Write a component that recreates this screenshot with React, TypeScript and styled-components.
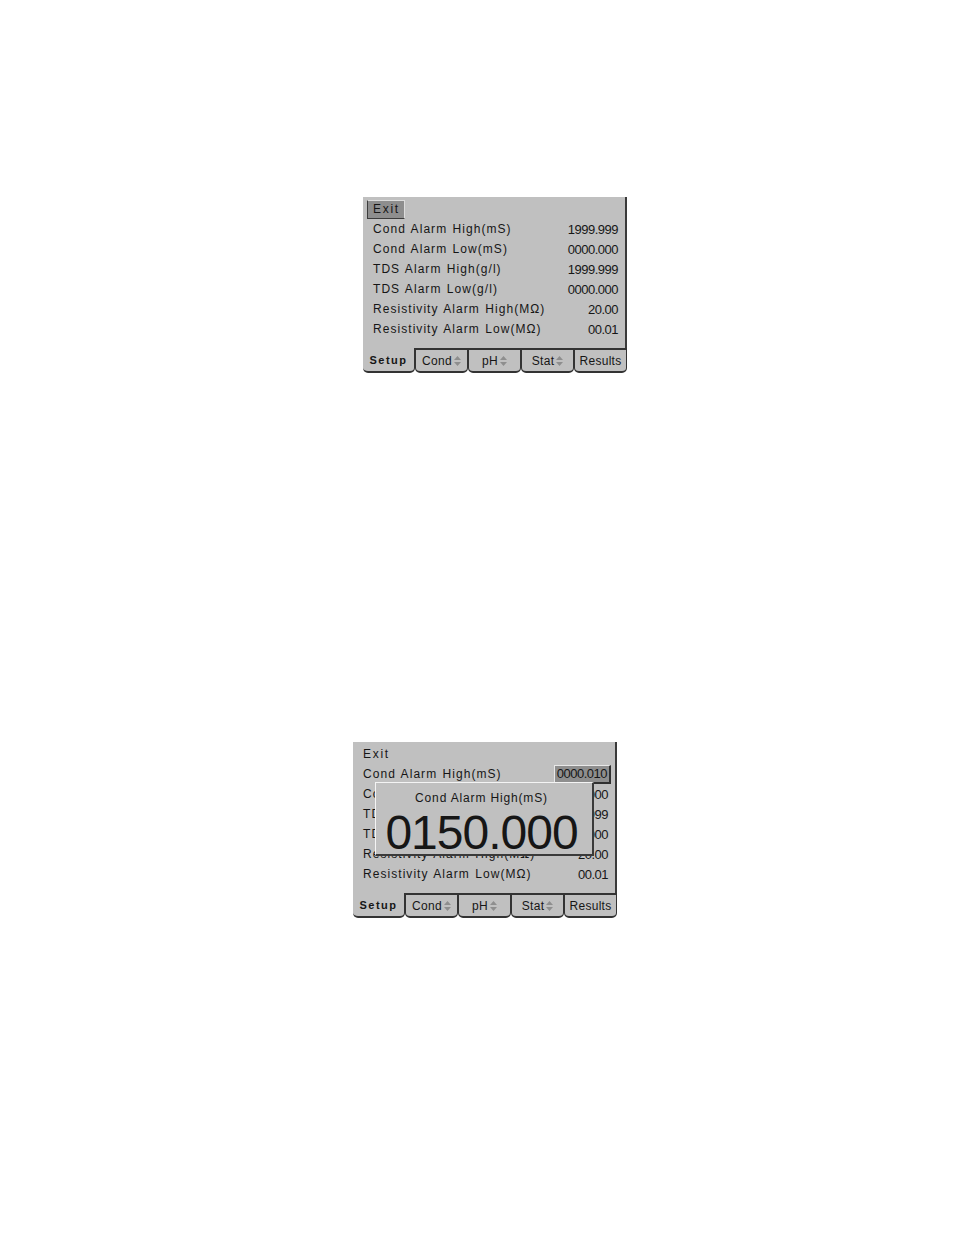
import React from "react";
import styled, { createGlobalStyle } from "styled-components";

const Global = createGlobalStyle`
  html, body { margin: 0; padding: 0; background: #ffffff; }
  body { width: 954px; height: 1235px; overflow: hidden; }
`;

const Page = styled.div`
  display: flex;
  flex-direction: column;
  align-items: flex-start;
  padding-top: 197px;
  font-family: "Liberation Sans", Arial, sans-serif;
  color: #161616;
`;

const Screen = styled.div<{ $left: number; $top?: number }>`
  position: relative;
  width: 264px;
  height: 176px;
  margin-left: ${(p) => p.$left}px;
  margin-top: ${(p) => p.$top ?? 0}px;
  display: flex;
  flex-direction: column;
  background: #ffffff;
`;

const Body = styled.div`
  flex: 1;
  background: #c0c0c0;
  border-right: 2px solid #3a3a3a;
  padding: 2px 7px 0 10px;
  display: flex;
  flex-direction: column;
`;

const Row = styled.div`
  height: 20px;
  display: flex;
  align-items: center;
  justify-content: space-between;
`;

const Label = styled.span`
  font-size: 12px;
  letter-spacing: 1.05px;
  word-spacing: 1px;
  white-space: nowrap;
`;

const ExitText = styled.span<{ $button?: boolean }>`
  font-size: 12px;
  letter-spacing: 1.7px;
  height: 19px;
  display: inline-flex;
  align-items: center;
  box-sizing: border-box;
  ${(p) =>
    p.$button
      ? `
    margin-left: -6px;
    padding: 0 4px 0 5px;
    background: #8e8e8e;
    border-top: 1px solid #dcdcdc;
    border-right: 1px solid #dcdcdc;
    border-left: 1px solid #3c3c3c;
    border-bottom: 1px solid #3c3c3c;
  `
      : ""}
`;

const Value = styled.span<{ $selected?: boolean }>`
  font-size: 13px;
  letter-spacing: -0.5px;
  white-space: nowrap;
  ${(p) =>
    p.$selected
      ? `
    margin-right: -3px;
    padding: 0 2px 0 2px;
    height: 19px;
    box-sizing: border-box;
    display: inline-flex;
    align-items: center;
    background: #8e8e8e;
    border-top: 1px solid #e8e8e8;
    border-left: 1px solid #e8e8e8;
    border-right: 2px solid #303030;
    border-bottom: 2px solid #303030;
  `
      : ""}
`;

const Spacer = styled.div`
  flex: 1;
`;

const TabBar = styled.div`
  height: 25px;
  display: flex;
  background: #ffffff;
`;

const Tab = styled.div<{ $active?: boolean }>`
  flex: 1 1 0;
  box-sizing: border-box;
  display: flex;
  align-items: center;
  justify-content: center;
  gap: 2px;
  background: #c0c0c0;
  border-radius: 0 0 5px 5px;
  border-bottom: 2px solid #333333;
  border-left: 1px solid #333333;
  border-right: 1px solid #333333;
  border-top: ${(p) => (p.$active ? "0" : "2px solid #333333")};
  font-size: ${(p) => (p.$active ? "11px" : "12px")};
  font-weight: ${(p) => (p.$active ? 700 : 400)};
  letter-spacing: ${(p) => (p.$active ? "1.5px" : "0.3px")};
  padding-top: ${(p) => (p.$active ? "1px" : "0")};
  &:first-child {
    border-left: 0;
  }
`;

const Updown = () => (
  <svg width="7" height="10" viewBox="0 0 7 10" aria-hidden="true">
    <polygon points="3.5,0 7,4 0,4" fill="#8e8e8e" />
    <polygon points="0,6 7,6 3.5,10" fill="#8e8e8e" />
  </svg>
);

const Popup = styled.div`
  position: absolute;
  left: 22px;
  top: 40px;
  width: 219px;
  height: 74px;
  box-sizing: border-box;
  padding-right: 5px;
  background: #c0c0c0;
  border-top: 1px solid #f4f4f4;
  border-left: 1px solid #f4f4f4;
  border-right: 2px solid #3a3a3a;
  border-bottom: 2px solid #3a3a3a;
  display: flex;
  flex-direction: column;
  align-items: center;
`;

const PopupTitle = styled.div`
  margin-top: 8px;
  font-size: 12px;
  letter-spacing: 0.85px;
  line-height: 14px;
`;

const BigNumber = styled.div`
  margin-top: 3px;
  font-size: 48px;
  line-height: 50px;
  letter-spacing: -1px;
  color: #161616;
`;

const rows: [string, string][] = [
  ["Cond Alarm High(mS)", "1999.999"],
  ["Cond Alarm Low(mS)", "0000.000"],
  ["TDS Alarm High(g/l)", "1999.999"],
  ["TDS Alarm Low(g/l)", "0000.000"],
  ["Resistivity Alarm High(MΩ)", "20.00"],
  ["Resistivity Alarm Low(MΩ)", "00.01"],
];

const Tabs = () => (
  <TabBar>
    <Tab $active>Setup</Tab>
    <Tab>
      Cond <Updown />
    </Tab>
    <Tab>
      pH <Updown />
    </Tab>
    <Tab>
      Stat <Updown />
    </Tab>
    <Tab>Results</Tab>
  </TabBar>
);

export default function App() {
  return (
    <Page>
      <Global />
      <Screen $left={363}>
        <Body>
          <Row>
            <ExitText $button>Exit</ExitText>
          </Row>
          {rows.map(([l, v]) => (
            <Row key={l}>
              <Label>{l}</Label>
              <Value>{v}</Value>
            </Row>
          ))}
          <Spacer />
        </Body>
        <Tabs />
      </Screen>

      <Screen $left={353} $top={369}>
        <Body>
          <Row>
            <ExitText>Exit</ExitText>
          </Row>
          {rows.map(([l, v], i) => (
            <Row key={l}>
              <Label>{l}</Label>
              <Value $selected={i === 0}>{i === 0 ? "0000.010" : v}</Value>
            </Row>
          ))}
          <Spacer />
        </Body>
        <Tabs />
        <Popup>
          <PopupTitle>Cond Alarm High(mS)</PopupTitle>
          <BigNumber>0150.000</BigNumber>
        </Popup>
      </Screen>
    </Page>
  );
}
